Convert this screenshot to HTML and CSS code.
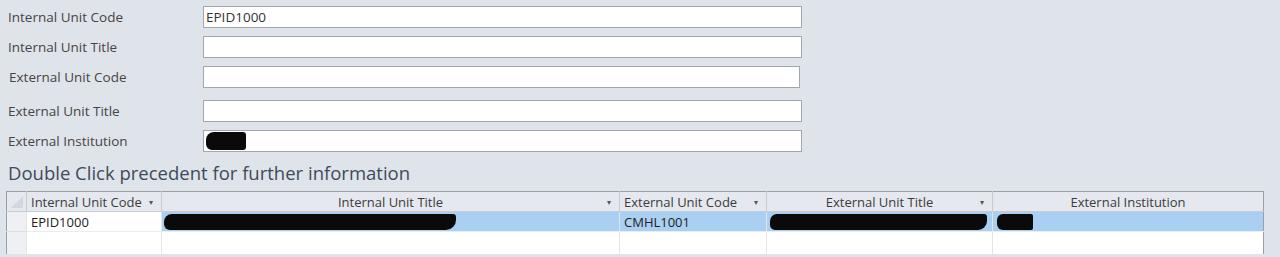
FILE: index.html
```html
<!DOCTYPE html>
<html lang="en">
<head>
  <meta charset="UTF-8" />
  <title>Unit Precedents</title>
  <link rel="stylesheet" href="styles.css">
</head>
<body>
  <div class="fields">
    <div class="field">
      <label>Internal Unit Code</label>
      <div class="box">EPID1000</div>
    </div>
    <div class="field">
      <label>Internal Unit Title</label>
      <div class="box"></div>
    </div>
    <div class="field">
      <label class="nudge">External Unit Code</label>
      <div class="box short"></div>
    </div>
    <div class="field tall">
      <label>External Unit Title</label>
      <div class="box"></div>
    </div>
    <div class="field">
      <label>External Institution</label>
      <div class="box"><span class="blot small"></span></div>
    </div>
  </div>

  <h2>Double Click precedent for further information</h2>

  <table class="grid">
    <colgroup>
      <col class="c-sel"><col class="c-code"><col class="c-title"><col class="c-ecode"><col class="c-etitle"><col class="c-inst">
    </colgroup>
    <thead>
      <tr>
        <th class="sel"><span class="corner"></span></th>
        <th class="left">Internal Unit Code <span class="arrow">&#9662;</span></th>
        <th>Internal Unit Title <span class="arrow">&#9662;</span></th>
        <th class="left">External Unit Code <span class="arrow">&#9662;</span></th>
        <th>External Unit Title <span class="arrow">&#9662;</span></th>
        <th>External Institution</th>
      </tr>
    </thead>
    <tbody>
      <tr class="picked">
        <td class="sel"></td>
        <td class="current">EPID1000</td>
        <td><span class="blot wide"></span></td>
        <td>CMHL1001</td>
        <td><span class="blot mid"></span></td>
        <td><span class="blot tiny"></span></td>
      </tr>
      <tr class="blank">
        <td class="sel"></td>
        <td></td><td></td><td></td><td></td><td></td>
      </tr>
    </tbody>
  </table>
</body>
</html>
```

FILE: styles.css
```css
body {
  margin: 0;
  background: #dfe3ea;
  font-family: "Open Sans", "Noto Sans", Arial, sans-serif;
  color: #444;
  height: 257px;
  overflow: hidden;
}
.fields {
  padding-top: 6px;
}
.field {
  display: flex;
  align-items: center;
  height: 22px;
  margin-bottom: 8px;
}
.field.tall {
  margin-top: 12px;
}
.field label {
  box-sizing: border-box;
  width: 203px;
  padding-left: 8px;
  font-size: 13.5px;
  color: #454545;
}
.field label.nudge {
  padding-left: 9px;
}
.box {
  width: 595px;
  height: 20px;
  background: #fff;
  border: 1px solid #a3a6ab;
  font-size: 13.5px;
  line-height: 20px;
  padding-left: 2px;
  color: #333;
}
.box.short {
  width: 593px;
}
h2 {
  margin: 9px 0 0 8px;
  font-size: 18.5px;
  font-weight: normal;
  color: #3f4a5a;
  height: 24px;
  line-height: 24px;
}
.grid {
  margin: 6px 0 0 6px;
  border-collapse: collapse;
  table-layout: fixed;
  width: 1257px;
  border: 1px solid #9d9fa3;
  border-bottom: none;
  font-size: 13px;
  color: #222;
}
.c-sel { width: 20px; }
.c-code { width: 135px; }
.c-title { width: 458px; }
.c-ecode { width: 147px; }
.c-etitle { width: 226px; }
.c-inst { width: 271px; }
th {
  background: #e5e8ee;
  font-weight: normal;
  color: #3c3c3c;
  height: 19px;
  padding: 0 4px;
  border-left: 1px solid #c8cbd0;
  border-bottom: 1px solid #c8cbd0;
  text-align: center;
  position: relative;
  white-space: nowrap;
}
th.left {
  text-align: left;
}
.arrow {
  position: absolute;
  right: 8px;
  top: 4px;
  font-size: 8px;
  color: #555;
}
th.sel {
  border-left: none;
  padding: 0;
}
.corner {
  position: absolute;
  left: 4px;
  top: 4px;
  width: 0;
  height: 0;
  border-left: 12px solid transparent;
  border-bottom: 12px solid #d3d6dc;
}
td {
  height: 19px;
  padding: 0 4px;
  border-left: 1px solid #e4e4e4;
  border-bottom: 1px solid #ececec;
  white-space: nowrap;
  overflow: hidden;
}
td.sel {
  background: #eef0f3;
  border-left: none;
  border-bottom-color: #dcdfe4;
}
.picked td {
  background: #a9cff3;
}
.picked td.sel {
  background: #eef0f3;
}
.picked td.current {
  background: #fff;
}
.blank td {
  background: #fff;
  height: 22px;
  border-bottom: none;
}
.blank td.sel {
  background: #eef0f3;
}
.blot {
  display: block;
  background: #0a0a0a;
}
.blot.wide {
  width: 292px;
  height: 16px;
  margin-left: -2px;
  border-radius: 8px 3px 10px 6px;
}
.blot.mid {
  width: 217px;
  height: 16px;
  margin-left: -1px;
  border-radius: 7px 3px 9px 5px;
}
.blot.tiny {
  width: 36px;
  height: 16px;
  border-radius: 6px 2px 2px 6px;
}
.blot.small {
  width: 40px;
  height: 18px;
  margin-top: 1px;
  border-radius: 8px 3px 3px 6px;
}
```
